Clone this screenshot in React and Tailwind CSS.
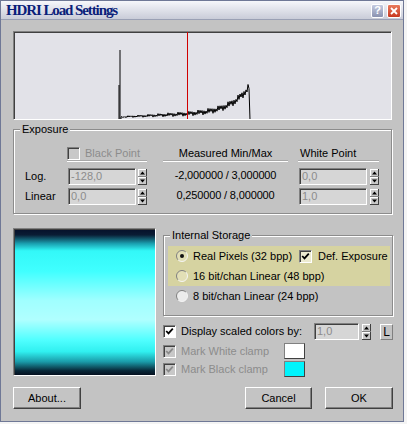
import React from "react";

const sunken =
  "border border-t-[#808080] border-l-[#808080] border-r-white border-b-white shadow-[inset_1px_1px_0_#404040]";
const raised =
  "border border-t-white border-l-white border-r-[#404040] border-b-[#404040] shadow-[inset_-1px_-1px_0_#808080]";

// histogram trace, local coords of the 379x89 panel
const histPath = (() => {
  let d = "M108 88";
  for (let i = 0; i <= 128; i++) {
    const t = i / 128;
    const base = 86 - 6 * t - 24 * Math.pow(t, 7);
    const jit = (i % 2 ? -1 : 1) * (0.6 + 2.4 * t) * (((i * 37) % 5) / 4 + 0.3);
    d += ` L${108 + i} ${(base + jit).toFixed(1)}`;
  }
  return d + " L237 89";
})();

const Spin = () => (
  <svg width="9" height="16" viewBox="0 0 9 16" className="shrink-0">
    <rect width="9" height="16" fill="#c8c8c8" />
    <path d="M0 .5H8.5M.5 0V16" stroke="#fff" />
    <path d="M8.5 0V16M0 15.5H9" stroke="#404040" />
    <path d="M0 7.5H9" stroke="#808080" />
    <path d="M1 8.5H8" stroke="#fff" />
    <path d="M2 5.5L4.5 2.5L7 5.5Z" fill="#000" />
    <path d="M2 10.5L4.5 13.5L7 10.5Z" fill="#000" />
  </svg>
);

const Check = ({ checked, disabled, bg = "bg-white" }) => (
  <span
    className={`w-[13px] h-[13px] shrink-0 flex items-center justify-center ${sunken} ${
      disabled ? "bg-[#c8c8c8]" : bg
    }`}
  >
    {checked && (
      <svg width="9" height="9" viewBox="0 0 9 9">
        <path
          d="M1.2 4L3.5 6.4L7.8 1.6"
          stroke={disabled ? "#8a8a8a" : "#000"}
          strokeWidth="1.8"
          fill="none"
        />
      </svg>
    )}
  </span>
);

const Radio = ({ checked, fill }) => (
  <svg width="12" height="12" viewBox="0 0 12 12" className="shrink-0">
    <circle cx="6" cy="6" r="5.5" fill={fill} />
    <path d="M2.1 9.9A5.5 5.5 0 0 1 9.9 2.1" stroke="#808080" fill="none" />
    <path d="M2.1 9.9A5.5 5.5 0 0 0 9.9 2.1" stroke="#f4f4f4" fill="none" />
    {checked && <circle cx="6" cy="6" r="2" fill="#111" />}
  </svg>
);

const Field = ({ value, w }) => (
  <div
    className={`${w} h-[17px] ${sunken} bg-[#d6d6d6] text-[#8c8c8c] pl-[2px] leading-[15px]`}
  >
    {value}
  </div>
);

const Button = ({ children, w }) => (
  <button
    className={`${w} h-[22px] ${raised} bg-[#c4c4c4] text-black text-[11px] flex items-center justify-center`}
  >
    {children}
  </button>
);

const groupBox =
  "border border-[#8c8c8c] shadow-[inset_1px_1px_0_#fff,1px_1px_0_#fff] min-w-0";
const legendCls = "ml-[6px] px-[2px] leading-[14px] bg-[#c3c3c3]";

export default function App() {
  return (
    <div className="w-[407px] h-[424px] bg-[#f4f4f4] font-['Liberation_Sans',Arial,sans-serif] text-[11px] text-black antialiased">
      <div className="w-[404px] h-[422px] border border-[#6f7896] bg-[#c3c3c3] flex flex-col">
        {/* title bar */}
        <div className="h-[19px] shrink-0 flex items-center bg-gradient-to-b from-[#f6f7fb] to-[#c9ccd8] border-b border-[#9aa0b4] pl-[5px] pr-[2px]">
          <span className="font-['Liberation_Serif',serif] font-bold text-[15px] tracking-[-1.1px] text-[#0b1f7a]">
            HDRI Load Settings
          </span>
          <div className="ml-auto flex gap-[3px] pt-[1px]">
            <div className="w-[13px] h-[14px] rounded-[2px] border border-white bg-gradient-to-b from-[#c5cbe0] to-[#8a92b0] flex items-center justify-center text-white font-bold text-[11px] leading-none">
              ?
            </div>
            <div className="w-[14px] h-[14px] rounded-[2px] border border-white bg-gradient-to-b from-[#e87a5c] to-[#c8361e] flex items-center justify-center">
              <svg width="8" height="8" viewBox="0 0 8 8">
                <path d="M1 1L7 7M7 1L1 7" stroke="#fff" strokeWidth="1.8" />
              </svg>
            </div>
          </div>
        </div>

        {/* body */}
        <div className="flex-1 pl-[12px] pr-[9px] pt-[11px]">
          <div className="w-[380px]">
            {/* histogram */}
            <div className={`w-[379px] h-[89px] ${sunken} bg-[#e2e2e8]`}>
              <svg width="377" height="87" viewBox="1 1 377 87" className="block">
                <path d="M107 19V88M106 54V88" stroke="#000" strokeWidth="1" />
                <path d={histPath} stroke="#000" strokeWidth="1" fill="none" />
                <path d="M174.5 0V89" stroke="#d00000" strokeWidth="1" />
              </svg>
            </div>

            {/* Exposure */}
            <fieldset className={`mt-[2px] w-[379px] h-[92px] ${groupBox}`}>
              <legend className={legendCls}>Exposure</legend>
              <div className="flex mt-[11px] h-[15px]">
                <div className="w-[53px]" />
                <div className="w-[80px] flex items-start gap-[5px] border-b border-b-white shadow-[0_-1px_0_#a8a8a8_inset]">
                  <Check disabled />
                  <span className="text-[#8c8c8c] leading-[13px]">Black Point</span>
                </div>
                <div className="w-[125px] ml-[16px] text-center border-b border-b-white shadow-[0_-1px_0_#a8a8a8_inset] leading-[13px]">
                  Measured Min/Max
                </div>
                <div className="w-[81px] ml-[10px] pl-[2px] border-b border-b-white shadow-[0_-1px_0_#a8a8a8_inset] leading-[13px]">
                  White Point
                </div>
              </div>
              {[
                ["Log.", "-128,0", "-2,000000 / 3,000000", "0,0", "mt-[6px]"],
                ["Linear", "0,0", "0,250000 / 8,000000", "1,0", "mt-[3px]"],
              ].map(([label, bp, mm, wp, mt]) => (
                <div key={label} className={`flex items-center h-[17px] ${mt}`}>
                  <div className="w-[54px] pl-[11px]">{label}</div>
                  <Field value={bp} w="w-[68px]" />
                  <div className="ml-[2px]">
                    <Spin />
                  </div>
                  <div className="w-[125px] ml-[16px] text-center tracking-[-0.15px] -mt-[3px]">
                    {mm}
                  </div>
                  <div className="ml-[11px]">
                    <Field value={wp} w="w-[68px]" />
                  </div>
                  <div className="ml-[3px]">
                    <Spin />
                  </div>
                </div>
              ))}
            </fieldset>

            {/* lower section */}
            <div className="flex gap-[7px] mt-[14px] h-[148px]">
              <div
                className={`w-[143px] h-[148px] ${sunken} bg-[linear-gradient(to_bottom,#05102a_0%,#0a1c34_4%,#1aa0b0_10%,#33f8f8_15%,#40ffff_29%,#a0ffff_49%,#b0ffff_62%,#50ffff_76%,#30f0f0_84%,#1a9aa8_91%,#082838_97%,#051020_100%)]`}
              />
              <div className="w-[230px]">
                <fieldset className={`w-[230px] h-[88px] ${groupBox}`}>
                  <legend className={legendCls}>Internal Storage</legend>
                  <div className="mt-[4px] ml-[4px] mr-[2px] h-[40px] bg-[#d6d3a1]">
                    <div className="flex items-center h-[20px] pl-[8px] gap-[5px] whitespace-nowrap">
                      <Radio checked fill="#e2dfb6" />
                      <span className="w-[101px]">Real Pixels (32 bpp)</span>
                      <Check checked bg="bg-[#ecead0]" />
                      <span className="ml-[1px]">Def. Exposure</span>
                    </div>
                    <div className="flex items-center h-[20px] pl-[8px] gap-[5px]">
                      <Radio fill="#e2dfb6" />
                      <span>16 bit/chan Linear (48 bpp)</span>
                    </div>
                  </div>
                  <div className="flex items-center h-[20px] pl-[12px] gap-[5px]">
                    <Radio fill="#ececec" />
                    <span>8 bit/chan Linear (24 bpp)</span>
                  </div>
                </fieldset>

                <div className="flex items-center h-[17px] mt-[7px]">
                  <Check checked />
                  <span className="w-[128px] ml-[5px]">Display scaled colors by:</span>
                  <div className="ml-[5px]">
                    <Field value="1,0" w="w-[45px]" />
                  </div>
                  <div className="ml-[3px]">
                    <Spin />
                  </div>
                  <div className="ml-[9px] w-[13px] h-[16px] border border-t-white border-l-white border-r-[#808080] border-b-[#808080] flex items-center justify-center text-[12px]">
                    L
                  </div>
                </div>
                <div className="flex items-center h-[16px] mt-[3px]">
                  <Check checked disabled />
                  <span className="w-[103px] ml-[5px] text-[#8c8c8c]">Mark White clamp</span>
                  <div className="w-[21px] h-[16px] bg-white border border-[#404040] border-t-[#808080] border-l-[#808080]" />
                </div>
                <div className="flex items-center h-[16px] mt-[2px]">
                  <Check checked disabled />
                  <span className="w-[103px] ml-[5px] text-[#8c8c8c]">Mark Black clamp</span>
                  <div className="w-[21px] h-[16px] bg-[#00f4fc] border border-[#404040] border-t-[#808080] border-l-[#808080]" />
                </div>
              </div>
            </div>

            {/* buttons */}
            <div className="flex mt-[11px]">
              <Button w="w-[68px]">About...</Button>
              <div className="ml-auto flex gap-[13px]">
                <Button w="w-[67px]">Cancel</Button>
                <Button w="w-[68px]">OK</Button>
              </div>
            </div>
          </div>
        </div>
      </div>
    </div>
  );
}
